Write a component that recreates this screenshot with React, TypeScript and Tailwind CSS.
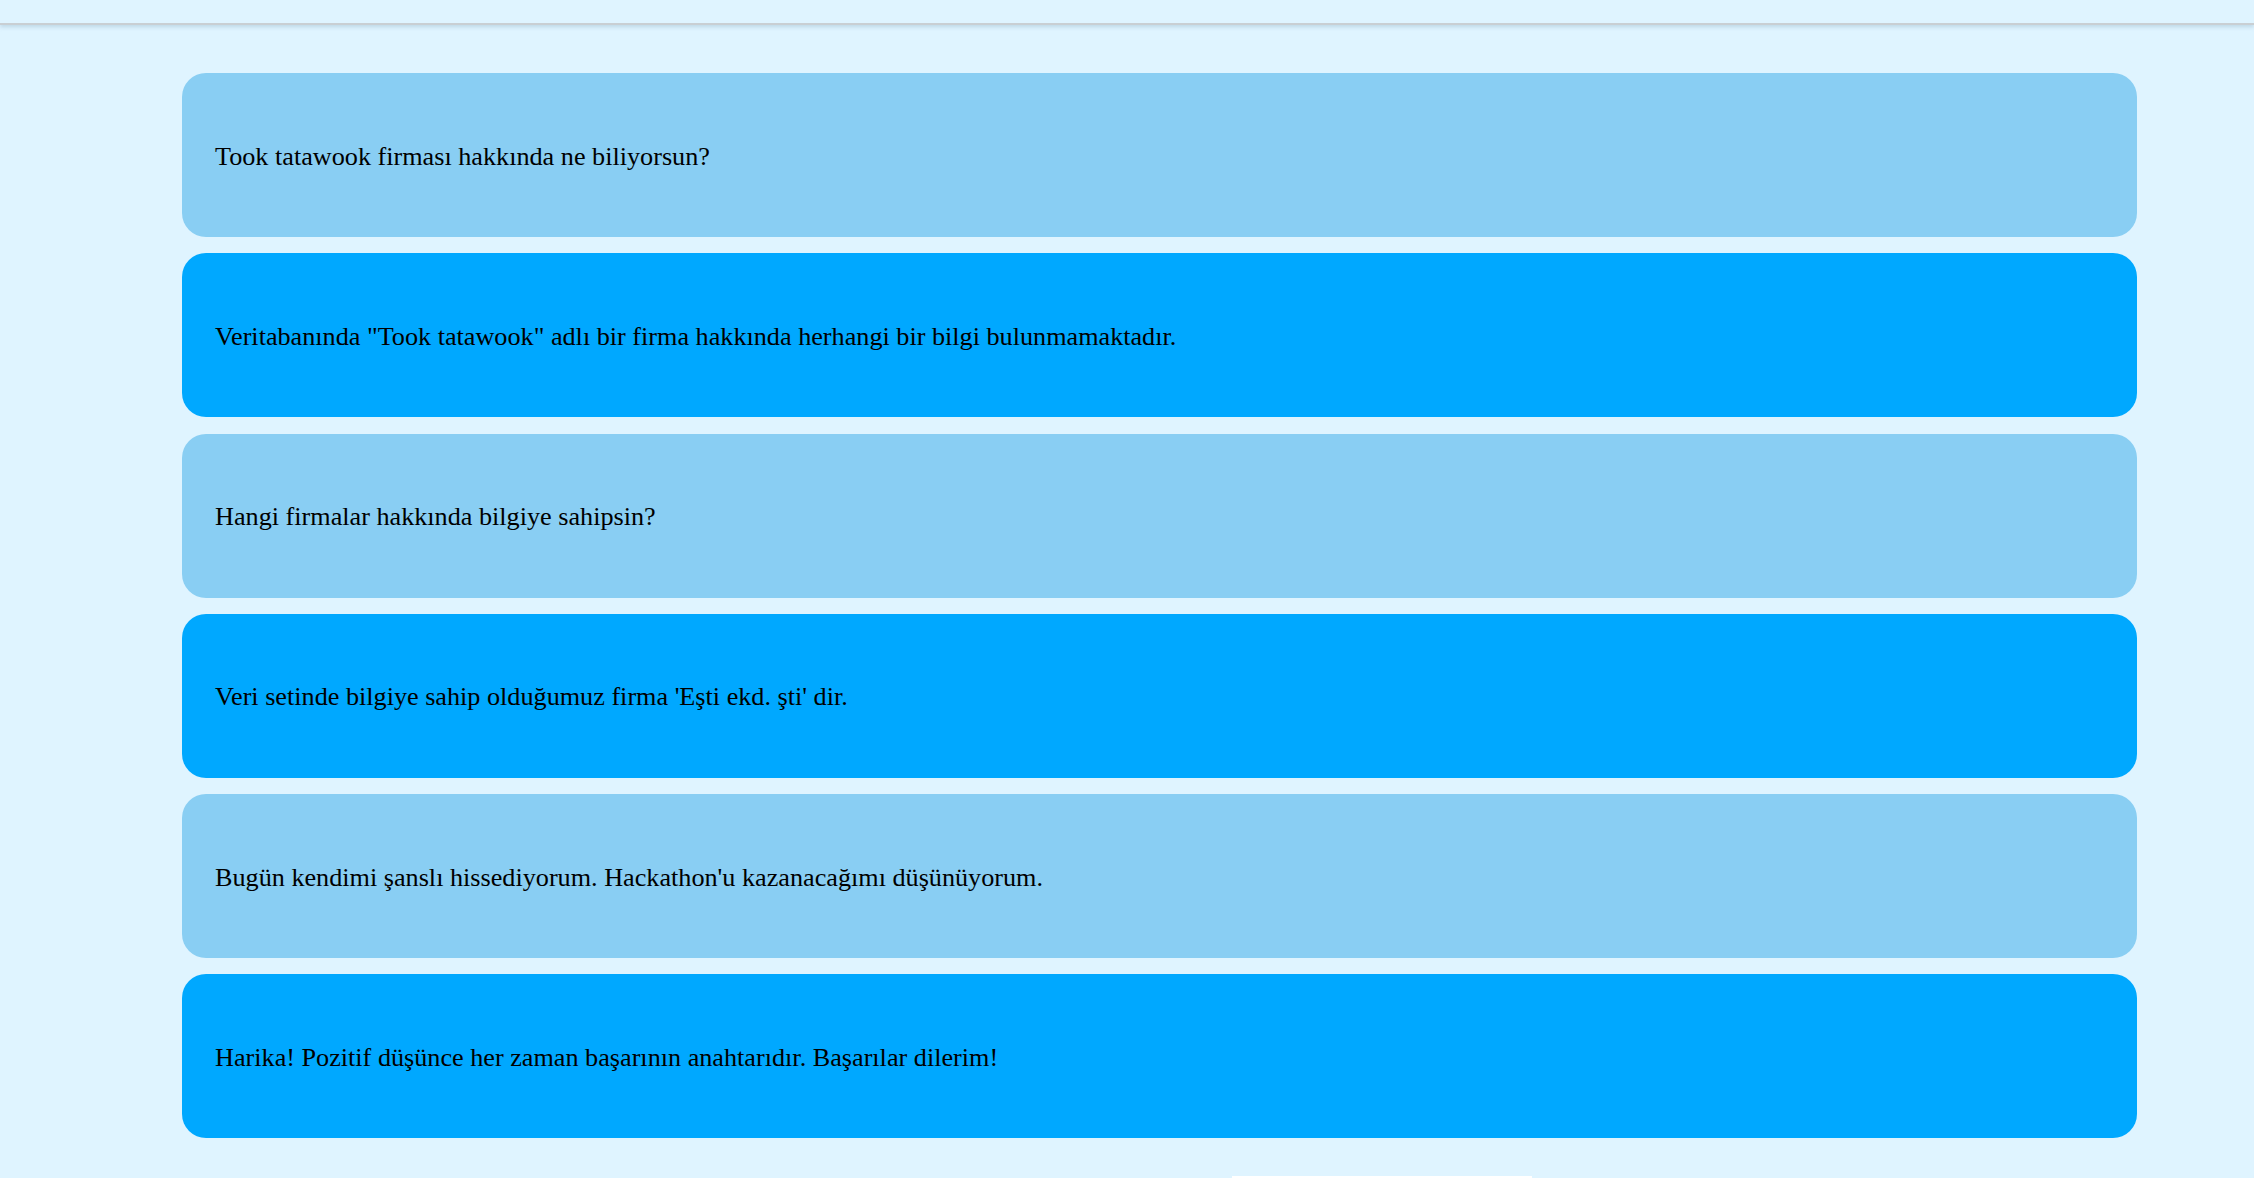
const messages = [
  { text: "Took tatawook firması hakkında ne biliyorsun?", fromUser: true },
  { text: "Veritabanında \"Took tatawook\" adlı bir firma hakkında herhangi bir bilgi bulunmamaktadır.", fromUser: false },
  { text: "Hangi firmalar hakkında bilgiye sahipsin?", fromUser: true },
  { text: "Veri setinde bilgiye sahip olduğumuz firma 'Eşti ekd. şti' dir.", fromUser: false },
  { text: "Bugün kendimi şanslı hissediyorum. Hackathon'u kazanacağımı düşünüyorum.", fromUser: true },
  { text: "Harika! Pozitif düşünce her zaman başarının anahtarıdır. Başarılar dilerim!", fromUser: false },
];

export default function App() {
  return (
    <div
      className="relative h-[1178px] overflow-hidden bg-[#dff4ff] text-black"
      style={{ fontFamily: '"Liberation Serif", "Times New Roman", serif' }}
    >
      {/* header strip */}
      <div className="h-[25px] border-b-2 border-[#c9cfd3] shadow-[0_2px_4px_rgba(150,180,200,0.45)]" />

      {/* chat bubbles */}
      <div className="mt-[48px] ml-[182px] flex w-[1955px] flex-col gap-[16.3px]">
        {messages.map((m, i) => (
          <div
            key={i}
            className={`flex h-[164px] items-center rounded-3xl pl-[33px] pt-[3px] text-[26.2px] leading-[30px] ${
              m.fromUser ? "bg-[#89cef3]" : "bg-[#00a8ff]"
            }`}
          >
            {m.text}
          </div>
        ))}
      </div>

      {/* input box edge peeking at the bottom */}
      <div className="absolute left-[1232px] top-[1176px] h-[10px] w-[300px] bg-white" />
    </div>
  );
}
